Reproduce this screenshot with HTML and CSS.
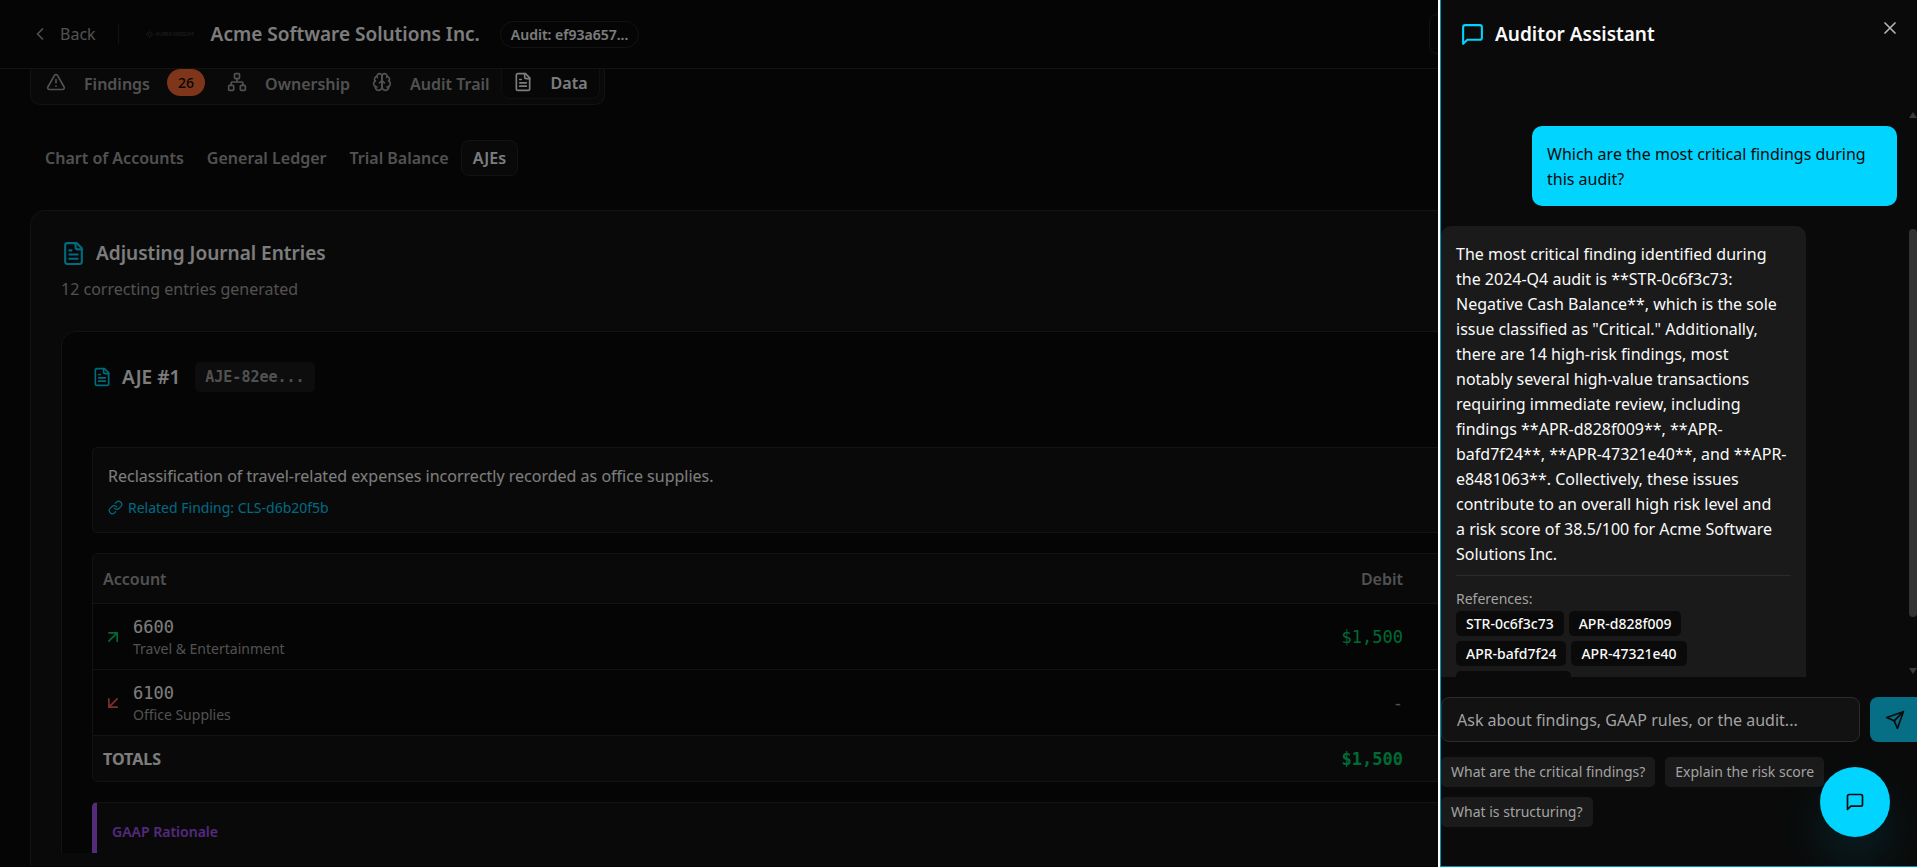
FILE: index.html
```
<!DOCTYPE html>
<html lang="en">
<head>
<meta charset="utf-8">
<title>Acme Software Solutions Inc.</title>
<link rel="stylesheet" href="styles.css">
</head>
<body>
<svg class="sprite" aria-hidden="true">
    <symbol id="file" viewBox="0 0 24 24">
        <path d="M15 2H6a2 2 0 0 0-2 2v16a2 2 0 0 0 2 2h12a2 2 0 0 0 2-2V7Z"/>
        <path d="M14 2v4a2 2 0 0 0 2 2h4M10 9H8M16 13H8M16 17H8"/>
    </symbol>
    <symbol id="message" viewBox="0 0 24 24">
        <path d="M21 15a2 2 0 0 1-2 2H7l-4 4V5a2 2 0 0 1 2-2h14a2 2 0 0 1 2 2z"/>
    </symbol>
</svg>

<div class="page">
    <header class="topbar">
        <button type="button" class="back">
            <svg class="icon" viewBox="0 0 24 24"><path d="m15 18-6-6 6-6"/></svg>
            Back
        </button>
        <span class="divider"></span>
        <span class="logo">
            <svg viewBox="0 0 24 24"><path d="M12 2v7M12 15v7M2 12h7M15 12h7M5 5l5 5M14 14l5 5M19 5l-5 5M10 14l-5 5"/></svg>
            AUREA INSIGHT
        </span>
        <h1>Acme Software Solutions Inc.</h1>
        <span class="audit-id">Audit: ef93a657...</span>
        <span class="topbar-action"></span>
    </header>

    <main class="content">
        <nav class="tabs">
            <button type="button" class="tab">
                <svg class="icon" viewBox="0 0 24 24"><path d="m21.73 18-8-14a2 2 0 0 0-3.48 0l-8 14A2 2 0 0 0 4 21h16a2 2 0 0 0 1.73-3M12 9v4M12 17h.01"/></svg>
                Findings <span class="count">26</span>
            </button>
            <button type="button" class="tab">
                <svg class="icon" viewBox="0 0 24 24"><rect x="16" y="16" width="6" height="6" rx="1"/><rect x="2" y="16" width="6" height="6" rx="1"/><rect x="9" y="2" width="6" height="6" rx="1"/><path d="M5 16v-3a1 1 0 0 1 1-1h12a1 1 0 0 1 1 1v3M12 12V8"/></svg>
                Ownership
            </button>
            <button type="button" class="tab">
                <svg class="icon" viewBox="0 0 24 24"><path d="M12 5a3 3 0 1 0-5.997.125 4 4 0 0 0-2.526 5.77 4 4 0 0 0 .556 6.588A4 4 0 1 0 12 18Z"/><path d="M12 5a3 3 0 1 1 5.997.125 4 4 0 0 1 2.526 5.77 4 4 0 0 1-.556 6.588A4 4 0 1 1 12 18Z"/><path d="M15 13a4.5 4.5 0 0 1-3-4 4.500 4.500 0 0 1-3 4M17.599 6.500a3 3 0 0 0 .399-1.375M6.003 5.125A3 3 0 0 0 6.401 6.500M3.477 10.896a4 4 0 0 1 .585-.396M19.938 10.500a4 4 0 0 1 .585.396M6 18a4 4 0 0 1-1.967-.516M19.967 17.484A4 4 0 0 1 18 18"/></svg>
                Audit Trail
            </button>
            <button type="button" class="tab active">
                <svg class="icon"><use href="#file"/></svg>
                Data
            </button>
        </nav>

        <nav class="subtabs">
            <button type="button">Chart of Accounts</button>
            <button type="button">General Ledger</button>
            <button type="button">Trial Balance</button>
            <button type="button" class="active">AJEs</button>
        </nav>

        <section class="card">
            <h2><svg class="icon"><use href="#file"/></svg>Adjusting Journal Entries</h2>
            <p class="subtitle">12 correcting entries generated</p>

            <div class="entries">
                <article class="entry">
                    <h3><svg class="icon"><use href="#file"/></svg>AJE #1 <code>AJE-82ee...</code></h3>

                    <div class="reason">
                        <p>Reclassification of travel-related expenses incorrectly recorded as office supplies.</p>
                        <a href="#finding">
                            <svg class="icon" viewBox="0 0 24 24"><path d="M10 13a5 5 0 0 0 7.540.540l3-3a5 5 0 0 0-7.070-7.070l-1.720 1.710"/><path d="M14 11a5 5 0 0 0-7.540-.540l-3 3a5 5 0 0 0 7.070 7.070l1.710-1.710"/></svg>
                            Related Finding: CLS-d6b20f5b
                        </a>
                    </div>

                    <div class="table-box">
                        <table>
                            <thead>
                                <tr><th>Account</th><th class="amount">Debit</th><th></th></tr>
                            </thead>
                            <tbody>
                                <tr>
                                    <td>
                                        <div class="account">
                                            <svg class="icon up" viewBox="0 0 24 24"><path d="M7 7h10v10M7 17 17 7"/></svg>
                                            <div><b>6600</b><span>Travel &amp; Entertainment</span></div>
                                        </div>
                                    </td>
                                    <td class="amount debit">$1,500</td>
                                    <td></td>
                                </tr>
                                <tr>
                                    <td>
                                        <div class="account">
                                            <svg class="icon down" viewBox="0 0 24 24"><path d="M17 7 7 17M17 17H7V7"/></svg>
                                            <div><b>6100</b><span>Office Supplies</span></div>
                                        </div>
                                    </td>
                                    <td class="amount none">-</td>
                                    <td></td>
                                </tr>
                            </tbody>
                            <tfoot>
                                <tr><td>TOTALS</td><td class="amount debit">$1,500</td><td></td></tr>
                            </tfoot>
                        </table>
                    </div>

                    <div class="rationale">
                        <h4>GAAP Rationale</h4>
                    </div>
                </article>
            </div>
        </section>
    </main>
</div>

<div class="backdrop"></div>

<aside class="assistant">
    <header>
        <h2><svg class="icon"><use href="#message"/></svg>Auditor Assistant</h2>
        <button type="button" class="close" aria-label="Close">
            <svg class="icon" viewBox="0 0 24 24"><path d="M18 6 6 18M6 6l12 12"/></svg>
        </button>
    </header>

    <div class="chat">
        <div class="messages">
            <div class="message user">Which are the most critical findings during this audit?</div>
            <div class="message reply">
                <p>The most critical finding identified during the 2024-Q4 audit is **STR-0c6f3c73: Negative Cash Balance**, which is the sole issue classified as "Critical." Additionally, there are 14 high-risk findings, most notably several high-value transactions requiring immediate review, including findings **APR-d828f009**, **APR-bafd7f24**, **APR-47321e40**, and **APR-e8481063**. Collectively, these issues contribute to an overall high risk level and a&nbsp;risk score of 38.5/100 for Acme Software Solutions Inc.</p>
                <div class="references">
                    <div>References:</div>
                    <ul>
                        <li>STR-0c6f3c73</li>
                        <li>APR-d828f009</li>
                        <li>APR-bafd7f24</li>
                        <li>APR-47321e40</li>
                        <li>APR-e8481063</li>
                    </ul>
                </div>
            </div>
        </div>
        <div class="scrollbar">
            <svg viewBox="0 0 8 6"><path d="M0 6 4 0 8 6z"/></svg>
            <div class="track"><div class="thumb"></div></div>
            <svg viewBox="0 0 8 6"><path d="M0 0 4 6 8 0z"/></svg>
        </div>
    </div>

    <form class="ask">
        <input type="text" aria-label="Question" placeholder="Ask about findings, GAAP rules, or the audit...">
        <button type="button" aria-label="Send">
            <svg class="icon" viewBox="0 0 24 24"><path d="m22 2-7 20-4-9-9-4Z"/><path d="M22 2 11 13"/></svg>
        </button>
    </form>

    <div class="suggestions">
        <button type="button">What are the critical findings?</button>
        <button type="button">Explain the risk score</button>
        <button type="button">What is structuring?</button>
    </div>
</aside>

<button type="button" class="fab" aria-label="Open assistant">
    <svg class="icon"><use href="#message"/></svg>
</button>
</body>
</html>
```
FILE: styles.css
```
* {
    box-sizing: border-box;
}

body {
    margin: 0;
    height: 100vh;
    overflow: hidden;
    background: #0a0a0a;
    color: #fafafa;
    font-family: "Noto Sans", sans-serif;
    font-size: 16px;
    line-height: 25px;
}

h1, h2, h3, h4, p, ul {
    margin: 0;
    padding: 0;
}

h1, h2, h3 {
    font-size: 19px;
    font-weight: 600;
}

button {
    padding: 0;
    border: 0;
    background: none;
    color: inherit;
    font: inherit;
    cursor: pointer;
}

.sprite {
    display: none;
}

.icon {
    width: 20px;
    height: 20px;
    flex: none;
    fill: none;
    stroke: currentColor;
    stroke-width: 2;
    stroke-linecap: round;
    stroke-linejoin: round;
}

/* page behind the drawer */

.page {
    display: flex;
    flex-direction: column;
    height: 100vh;
}

.topbar {
    display: flex;
    align-items: center;
    height: 69px;
    flex: none;
    padding-left: 30px;
    border-bottom: 1px solid #262626;
}

.back {
    display: flex;
    align-items: center;
    gap: 10px;
    color: #a3a3a3;
}

.divider {
    width: 1px;
    height: 20px;
    margin: 0 26px 0 22px;
    background: #262626;
}

.logo {
    display: flex;
    align-items: center;
    gap: 2px;
    width: 66px;
    color: #363b45;
    font-size: 5px;
    font-weight: 600;
    line-height: 10px;
    white-space: nowrap;
}

.logo svg {
    width: 9px;
    height: 9px;
    flex: none;
    stroke: currentColor;
    stroke-width: 2;
}

.audit-id {
    margin-left: 20px;
    padding: 2px 10px;
    border: 1px solid #262626;
    border-radius: 20px;
    font-size: 14px;
    font-weight: 600;
    line-height: 21px;
}

.topbar-action {
    width: 462px;
    height: 40px;
    margin: 0 26px 0 auto;
    border: 1px solid #262626;
    border-radius: 8px;
}

.content {
    display: flex;
    flex-direction: column;
    flex: 1;
    min-height: 0;
    padding: 0 30px 1px;
}

.tabs {
    display: flex;
    align-self: flex-start;
    padding: 0 4px 5px;
    border: 1px solid #262626;
    border-top: 0;
    border-radius: 0 0 10px 10px;
    background: #121212;
}

.tab {
    display: flex;
    align-items: center;
    height: 30px;
    padding: 0 11px;
    color: #a3a3a3;
    font-weight: 600;
}

.tab .icon {
    margin: 0 18px 4px 0;
}

.count {
    align-self: flex-start;
    margin-left: 17px;
    padding: 0 11px;
    border-radius: 14px;
    background: #ff6b35;
    color: #0a0a0a;
    font-size: 14px;
    font-weight: 500;
    line-height: 27px;
}

.tab.active {
    border: 1px solid #1f1f1f;
    border-top: 0;
    border-radius: 0 0 8px 8px;
    background: #0f0f0f;
    color: #fafafa;
}

.subtabs {
    display: flex;
    gap: 1px;
    margin: 35px 0 34px 4px;
}

.subtabs button {
    height: 36px;
    padding: 1px 11px 0;
    color: #a3a3a3;
    font-weight: 600;
}

.subtabs .active {
    border: 1px solid #262626;
    border-radius: 8px;
    background: #121212;
    color: #fafafa;
}

.card {
    display: flex;
    flex-direction: column;
    flex: 1;
    min-height: 0;
    padding: 30px 30px 13px;
    border: 1px solid #262626;
    border-bottom: 0;
    border-radius: 15px 15px 0 0;
    background: #121212;
}

.card h2,
.entry h3 {
    display: flex;
    align-items: center;
    gap: 10px;
}

.card h2 .icon {
    width: 25px;
    height: 25px;
    color: #00d4ff;
}

.subtitle {
    margin-top: 11px;
    color: #a3a3a3;
}

.entries {
    flex: 1;
    min-height: 0;
    margin-top: 29px;
    overflow: hidden;
}

.entry {
    padding: 30px;
    border: 1px solid #262626;
    border-radius: 15px;
    background: #0a0a0a;
}

.entry h3 .icon {
    color: #00d4ff;
}

.entry code {
    margin-left: 5px;
    padding: 0 10px;
    border-radius: 5px;
    background: #1a1a1a;
    color: #a3a3a3;
    font: 700 15px/30px "DejaVu Sans Mono", monospace;
}

.reason {
    margin-top: 55px;
    padding: 16px 15px 12px;
    border: 1px solid #262626;
    border-radius: 5px;
    background: #121212;
}

.reason a {
    display: flex;
    align-items: center;
    gap: 5px;
    margin-top: 6px;
    color: #00d4ff;
    font-size: 14px;
    text-decoration: none;
}

.reason .icon {
    width: 15px;
    height: 15px;
}

.table-box {
    margin-top: 20px;
    border: 1px solid #262626;
    border-radius: 5px;
    overflow: hidden;
}

table {
    width: 100%;
    border-collapse: collapse;
    table-layout: fixed;
}

th,
td {
    padding: 2px 10px 0;
    border-bottom: 1px solid #262626;
    text-align: left;
}

th {
    height: 49px;
    background: #121212;
    color: #a3a3a3;
    font-weight: 600;
}

th:nth-child(2) {
    width: 32%;
}

th:nth-child(3) {
    width: 411px;
}

td {
    height: 66px;
}

.account {
    display: flex;
    align-items: center;
    gap: 10px;
}

.account b,
.account span {
    display: block;
}

.account b {
    font: 500 17px/24px "DejaVu Sans Mono", monospace;
}

.account span {
    color: #a3a3a3;
    font-size: 14px;
    line-height: 20px;
}

.up {
    color: #00d26a;
}

.down {
    color: #ff5a5f;
}

.amount {
    text-align: right;
}

td.amount {
    font-family: "DejaVu Sans Mono", monospace;
    font-size: 17px;
}

.debit {
    color: #00d26a;
}

.none {
    color: #a3a3a3;
}

tfoot td {
    height: 46px;
    border-bottom: 0;
    background: #121212;
    font-weight: 700;
}

.rationale {
    height: 120px;
    margin-top: 20px;
    padding: 16px 15px;
    border: 1px solid #262626;
    border-left: 5px solid #a855f7;
    border-radius: 5px;
    background: #121212;
}

.rationale h4 {
    color: #a855f7;
    font-size: 14px;
    font-weight: 600;
}

.backdrop {
    position: fixed;
    inset: 0;
    background: rgba(0, 0, 0, 0.5);
}

/* assistant drawer */

.assistant {
    position: fixed;
    top: 0;
    right: 0;
    bottom: 0;
    display: flex;
    flex-direction: column;
    width: 479px;
    padding: 0 0 40px 1px;
    border-left: 2px solid #ffffff;
    background: #0a0a0a;
    box-shadow: inset 1px -1px 0 #0092b3;
    overflow: hidden;
}

.assistant header {
    display: flex;
    justify-content: space-between;
    align-items: flex-start;
    flex: none;
    height: 109px;
    padding: 15px 17px 0 19px;
}

.assistant h2 {
    display: flex;
    align-items: center;
    gap: 10px;
    margin-top: 7px;
}

.assistant h2 .icon {
    width: 25px;
    height: 25px;
    color: #00d4ff;
}

.close {
    display: flex;
    margin-top: 3px;
    color: #b5b5b5;
}

.chat {
    display: flex;
    flex: 1;
    min-height: 0;
}

.messages {
    display: flex;
    flex-direction: column;
    gap: 20px;
    flex: 1;
    padding: 17px 12px 0 0;
    overflow: hidden;
}

.message {
    flex: none;
    width: 365px;
    padding: 16px 15px 14px;
    border-radius: 10px;
}

.user {
    align-self: flex-end;
    background: #00d4ff;
    color: #0a0a0a;
}

.reply {
    background: #1a1a1a;
}

.reply p {
    padding-right: 3px;
}

.references {
    margin-top: 8px;
    padding-top: 10px;
    border-top: 1px solid #2b2b2b;
    color: #a3a3a3;
    font-size: 14px;
}

.references ul {
    display: flex;
    flex-wrap: wrap;
    gap: 5px;
    list-style: none;
}

.references li {
    padding: 0 10px;
    border-radius: 5px;
    background: #0a0a0a;
    color: #fafafa;
    font-weight: 500;
}

.scrollbar {
    display: flex;
    flex-direction: column;
    gap: 4px;
    width: 8px;
    padding: 3px 0;
}

.scrollbar svg {
    width: 8px;
    height: 6px;
    fill: #3a3a3a;
}

.track {
    flex: 1;
    padding-top: 107px;
}

.thumb {
    height: 388px;
    border-radius: 4px;
    background: #333333;
}

.ask {
    display: flex;
    gap: 10px;
    flex: none;
    margin: 20px -8px 15px 0;
}

.ask input {
    flex: 1;
    min-width: 0;
    height: 45px;
    padding: 0 15px;
    border: 1px solid #2b2b2b;
    border-radius: 8px;
    background: #121212;
    color: #fafafa;
    font: inherit;
}

.ask input::placeholder {
    color: #a3a3a3;
    opacity: 1;
}

.ask button {
    display: flex;
    align-items: center;
    padding: 0 20px 0 15px;
    border-radius: 8px;
    background: #066f86;
    color: #0a0a0a;
}

.suggestions {
    display: flex;
    flex-wrap: wrap;
    flex: none;
    gap: 10px;
}

.suggestions button {
    padding: 0 10px;
    border-radius: 5px;
    background: #1a1a1a;
    color: #a3a3a3;
    font-size: 14px;
    line-height: 30px;
}

.fab {
    position: fixed;
    right: 27px;
    bottom: 30px;
    display: flex;
    align-items: center;
    justify-content: center;
    width: 70px;
    height: 70px;
    border-radius: 50%;
    background: #00d4ff;
    color: #0a0a0a;
    box-shadow: 0 25px 50px rgba(0, 212, 255, 0.12);
}
```
